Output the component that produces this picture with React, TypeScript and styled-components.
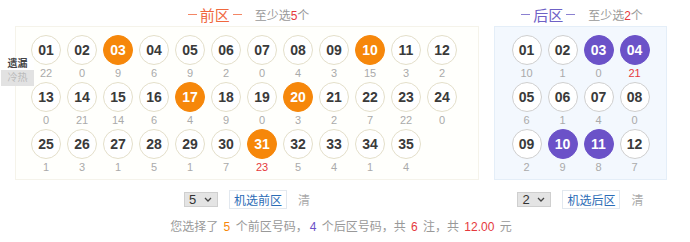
import React from 'react'
import styled, { createGlobalStyle } from 'styled-components'

const GlobalStyle = createGlobalStyle`
  html, body {
    margin: 0;
    padding: 0;
    background: #fff;
  }
  body {
    font-family: "Liberation Sans", "Noto Sans CJK SC", sans-serif;
    color: #333;
  }
`

type Tone = 'front' | 'back'

const toneColor = {
  front: '#f6870a',
  back: '#6b52c8',
}

const titleColor = {
  front: '#f0683e',
  back: '#6e61c6',
}

const frontMiss = [
  22, 0, 9, 6, 9, 2, 0, 4, 3, 15, 3, 2,
  0, 21, 14, 6, 4, 9, 0, 3, 2, 7, 22, 0,
  1, 3, 1, 5, 1, 7, 23, 5, 4, 1, 4,
]
const frontPicked = [3, 10, 17, 20, 31]
const backMiss = [10, 1, 0, 21, 6, 1, 4, 0, 2, 9, 8, 7]
const backPicked = [3, 4, 10, 11]

const pad = (n: number) => (n < 10 ? '0' + n : String(n))

const App: React.FC = () => {
  const frontMax = Math.max(...frontMiss)
  const backMax = Math.max(...backMiss)
  return (
    <Page>
      <GlobalStyle />
      <Columns>
        <Column width={464}>
          <Header>
            <Dash tone="front" />
            <Title tone="front">前区</Title>
            <Dash tone="front" />
            <Hint>至少选<Em>5</Em>个</Hint>
          </Header>
          <Panel tone="front">
            <Tabs>
              <Tab active>遗漏</Tab>
              <Tab>冷热</Tab>
            </Tabs>
            <BallGrid cols={12}>
              {frontMiss.map((m, i) => (
                <Cell key={i}>
                  <Ball tone="front" picked={frontPicked.includes(i + 1)}>{pad(i + 1)}</Ball>
                  <Miss hot={m === frontMax}>{m}</Miss>
                </Cell>
              ))}
            </BallGrid>
          </Panel>
          <Controls>
            <Select>
              <span>5</span>
              <Chevron />
            </Select>
            <RandomButton>机选前区</RandomButton>
            <Clear>清</Clear>
          </Controls>
        </Column>
        <Column width={173}>
          <Header>
            <Dash tone="back" />
            <Title tone="back">后区</Title>
            <Dash tone="back" />
            <Hint>至少选<Em>2</Em>个</Hint>
          </Header>
          <Panel tone="back">
            <BallGrid cols={4}>
              {backMiss.map((m, i) => (
                <Cell key={i}>
                  <Ball tone="back" picked={backPicked.includes(i + 1)}>{pad(i + 1)}</Ball>
                  <Miss hot={m === backMax}>{m}</Miss>
                </Cell>
              ))}
            </BallGrid>
          </Panel>
          <Controls>
            <Select>
              <span>2</span>
              <Chevron />
            </Select>
            <RandomButton>机选后区</RandomButton>
            <Clear>清</Clear>
          </Controls>
        </Column>
      </Columns>
      <Summary>
        您选择了 <Num color={toneColor.front}>5</Num> 个前区号码，
        <Num color={toneColor.back}>4</Num> 个后区号码，共 <Num color="#e5393d">6</Num> 注，共 <Num color="#e5393d">12.00</Num> 元
      </Summary>
    </Page>
  )
}
export default App

const Chevron: React.FC = () => (
  <svg width="8" height="5" viewBox="0 0 8 5">
    <path d="M1 1l3 3 3-3" fill="none" stroke="#444" strokeWidth="1.3" />
  </svg>
)

const Page = styled.div`
  width: 690px;
  padding: 0 0 0 15px;
  box-sizing: border-box;
`
const Columns = styled.div`
  display: flex;
  gap: 15px;
`
const Column = styled.div<{ width: number }>`
  width: ${p => p.width}px;
  display: flex;
  flex-direction: column;
`
const Header = styled.div`
  height: 26px;
  display: flex;
  align-items: center;
  justify-content: center;
  padding-top: 2px;
  box-sizing: border-box;
`
const Dash = styled.span<{ tone: Tone }>`
  display: inline-block;
  width: 9px;
  height: 1px;
  background: ${p => titleColor[p.tone]};
  opacity: 0.8;
  margin: 0 3px;
`
const Title = styled.span<{ tone: Tone }>`
  font-size: 15px;
  color: ${p => titleColor[p.tone]};
`
const Hint = styled.span`
  font-size: 12px;
  color: #999;
  margin-left: 10px;
`
const Em = styled.span`
  color: #e5393d;
`
const Panel = styled.div<{ tone: Tone }>`
  position: relative;
  box-sizing: border-box;
  border: 1px solid ${p => (p.tone === 'front' ? '#f5f3ea' : '#e4eef8')};
  background: ${p => (p.tone === 'front' ? '#fffffc' : '#f3f8fe')};
  padding: ${p => (p.tone === 'front' ? '8px 0 3px 12px' : '8px 0 3px')};
  display: flex;
  justify-content: ${p => (p.tone === 'front' ? 'flex-start' : 'center')};
`
const Tabs = styled.div`
  position: absolute;
  left: -15px;
  top: 31px;
  width: 33px;
  display: flex;
  flex-direction: column;
`
const Tab = styled.div<{ active?: boolean }>`
  font-size: 10px;
  line-height: ${p => (p.active ? '12px' : '16px')};
  text-align: center;
  color: ${p => (p.active ? '#444' : '#bbb')};
  font-weight: ${p => (p.active ? 'bold' : 'normal')};
  background: ${p => (p.active ? '#fff' : '#e2e2e2')};
`
const BallGrid = styled.div<{ cols: number }>`
  display: grid;
  grid-template-columns: repeat(${p => p.cols}, 36px);
`
const Cell = styled.div`
  display: flex;
  flex-direction: column;
  align-items: center;
  height: 47px;
`
const Ball = styled.div<{ tone: Tone; picked: boolean }>`
  width: 30px;
  height: 30px;
  box-sizing: border-box;
  border-radius: 50%;
  border: 1px solid ${p => (p.picked ? toneColor[p.tone] : p.tone === 'front' ? '#e4dfca' : '#cfcfcf')};
  background: ${p => (p.picked ? toneColor[p.tone] : '#fff')};
  color: ${p => (p.picked ? '#fff' : '#3a3a3a')};
  font-size: 14px;
  font-weight: bold;
  display: flex;
  align-items: center;
  justify-content: center;
`
const Miss = styled.div<{ hot: boolean }>`
  font-size: 11px;
  line-height: 17px;
  color: ${p => (p.hot ? '#e5393d' : '#aaa')};
`
const Controls = styled.div`
  display: flex;
  align-items: center;
  justify-content: center;
  gap: 11px;
  margin-top: 10px;
  height: 19px;
`
const Select = styled.div`
  width: 34px;
  height: 15px;
  box-sizing: border-box;
  background: #e4e4e4;
  border: 1px solid #cfcfcf;
  display: flex;
  align-items: center;
  justify-content: space-between;
  padding: 0 5px 0 4px;
  font-size: 13px;
  color: #333;
`
const RandomButton = styled.div`
  width: 58px;
  height: 19px;
  box-sizing: border-box;
  border: 1px solid #e2e8ef;
  background: #fff;
  color: #2b6cb6;
  font-size: 12px;
  display: flex;
  align-items: center;
  justify-content: center;
`
const Clear = styled.span`
  font-size: 12px;
  color: #aaa;
`
const Summary = styled.div`
  width: 652px;
  margin-top: 9px;
  text-align: center;
  font-size: 12px;
  line-height: 18px;
  color: #999;
`
const Num = styled.span<{ color: string }>`
  color: ${p => p.color};
  margin: 0 2px;
`
